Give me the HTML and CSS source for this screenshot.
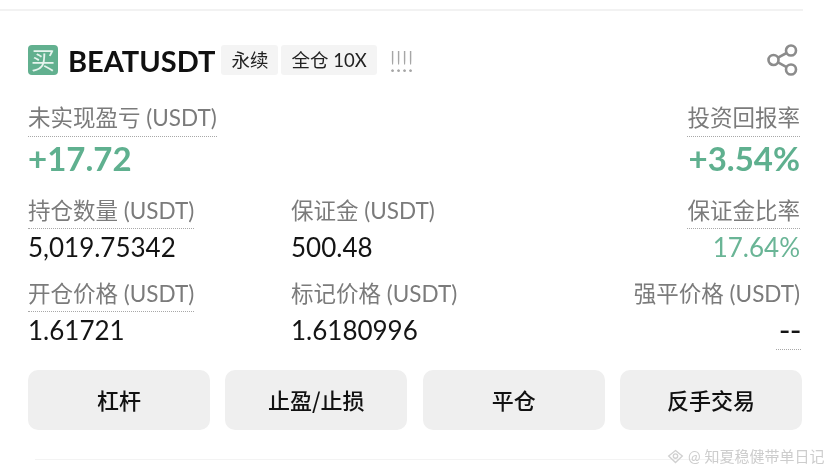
FILE: index.html
```html
<!DOCTYPE html>
<html lang="zh">
<head>
<meta charset="utf-8">
<title>BEATUSDT</title>
<link rel="stylesheet" href="styles.css">
</head>
<body>
<div class="page">
  <div class="rule-top"></div>
  <section class="card">
    <header class="head">
      <span class="side">买</span>
      <span class="symbol">BEATUSDT</span>
      <span class="tag">永续</span>
      <span class="tag">全仓 10X</span>
      <span class="bars">!!!!</span>
      <svg class="share" viewBox="0 0 32 32" width="32" height="32" aria-hidden="true">
        <g fill="none" stroke="#8c8c8c" stroke-width="2.6">
          <circle cx="7.5" cy="16" r="5"/>
          <circle cx="25" cy="6.5" r="5"/>
          <circle cx="25" cy="25.5" r="5"/>
          <path d="M12 13.6 20.6 9M12 18.4l8.6 4.7"/>
        </g>
      </svg>
    </header>

    <div class="pnl">
      <div class="cell">
        <span class="label dotted">未实现盈亏 (USDT)</span>
        <span class="big">+17.72</span>
      </div>
      <div class="cell end">
        <span class="label dotted">投资回报率</span>
        <span class="big">+3.54%</span>
      </div>
    </div>

    <div class="stats">
      <div class="cell">
        <span class="label dotted">持仓数量 (USDT)</span>
        <span class="value">5,019.75342</span>
      </div>
      <div class="cell">
        <span class="label">保证金 (USDT)</span>
        <span class="value">500.48</span>
      </div>
      <div class="cell end">
        <span class="label dotted">保证金比率</span>
        <span class="value green">17.64%</span>
      </div>
      <div class="cell">
        <span class="label dotted">开仓价格 (USDT)</span>
        <span class="value">1.61721</span>
      </div>
      <div class="cell">
        <span class="label">标记价格 (USDT)</span>
        <span class="value">1.6180996</span>
      </div>
      <div class="cell end">
        <span class="label">强平价格 (USDT)</span>
        <span class="value dashes">--</span>
      </div>
    </div>

    <div class="actions">
      <button class="btn">杠杆</button>
      <button class="btn">止盈/止损</button>
      <button class="btn">平仓</button>
      <button class="btn">反手交易</button>
    </div>
  </section>
  <div class="rule-bottom"></div>
  <div class="watermark">
    <svg viewBox="0 0 20 20" width="17" height="17" aria-hidden="true">
      <g fill="none" stroke="#d0d0d0" stroke-width="1.6">
        <path d="M10 3 18 9.5 10 17 2 9.5Z"/>
        <circle cx="10" cy="9.5" r="2.6"/>
      </g>
    </svg>
    <span>@ 知夏稳健带单日记</span>
  </div>
</div>
</body>
</html>
```

FILE: styles.css
```css
* { box-sizing: border-box; }
html, body { margin: 0; padding: 0; background: #fff; }
body {
  width: 829px;
  height: 470px;
  overflow: hidden;
  font-family: "Lato", "Noto Sans CJK SC", sans-serif;
  color: #111;
}
.page {
  position: relative;
  height: 470px;
  padding-top: 9px;
  filter: blur(0.4px);
}
.rule-top {
  height: 2px;
  width: 803px;
  background: #f2f2f2;
}
.card {
  width: 802px;
  padding: 34px 0 0 28px;
}
.head {
  display: flex;
  align-items: center;
  height: 30px;
}
.side {
  width: 30px;
  height: 30px;
  border-radius: 4px;
  background: #62b08f;
  color: #e6f4ee;
  font-size: 24px;
  line-height: 30px;
  text-align: center;
  font-weight: 400;
}
.symbol {
  margin-left: 10px;
  font-size: 29px;
  font-weight: 700;
  color: #111;
  white-space: nowrap;
}
.tag {
  margin-left: 6px;
  height: 30px;
  padding: 0 10px;
  background: #f4f4f4;
  border-radius: 3px;
  font-size: 18.5px;
  line-height: 30px;
  color: #222;
  white-space: nowrap;
}
.tag + .tag { margin-left: 3px; }
.bars {
  margin-left: 12px;
  font-size: 30px;
  line-height: 30px;
  color: #a6a6a6;
  font-weight: 300;
  letter-spacing: -1.6px;
}
.share { margin-left: auto; margin-right: 4px; }

.pnl {
  display: flex;
  justify-content: space-between;
  margin-top: 29px;
  padding-right: 2px;
}
.cell {
  display: flex;
  flex-direction: column;
  align-items: flex-start;
}
.cell.end { align-items: flex-end; }
.label {
  font-size: 22.5px;
  line-height: 28px;
  padding-bottom: 4px;
  color: #7b7b7b;
  white-space: nowrap;
  border-bottom: 1px solid transparent;
}
.stats .label {
  line-height: 30px;
  padding-bottom: 2px;
}
.dotted { border-bottom: 1px dotted #a8a8a8; }
.big {
  font-size: 33px;
  line-height: 42px;
  font-weight: 700;
  color: #5fb08f;
}
.stats {
  display: grid;
  grid-template-columns: 263px 1fr auto;
  row-gap: 14px;
  margin-top: 17px;
  padding-right: 2px;
}
.value {
  font-size: 26px;
  line-height: 36px;
  color: #141414;
}
.value.green { color: #6ab596; }
.dashes {
  font-family: "DejaVu Sans", sans-serif;
  font-size: 30px;
  border-bottom: 1px dotted #a8a8a8;
  padding: 0 0 1px 3px;
  margin-right: -1px;
}
.actions {
  display: grid;
  grid-template-columns: repeat(4, 182px);
  justify-content: space-between;
  margin-top: 20px;
}
.btn {
  height: 60px;
  border: 0;
  border-radius: 10px;
  background: #efefef;
  color: #111;
  font: 500 22px "Noto Sans CJK SC", sans-serif;
  padding: 0 0 3px;
}
.rule-bottom {
  height: 1px;
  width: 700px;
  margin: 29px 0 0 35px;
  background: #f3f3f3;
}
.watermark {
  position: absolute;
  top: 446px;
  left: 667px;
  display: flex;
  align-items: center;
  gap: 4px;
  font-size: 15px;
  line-height: 20px;
  color: #cdcdcd;
  white-space: nowrap;
}
```
